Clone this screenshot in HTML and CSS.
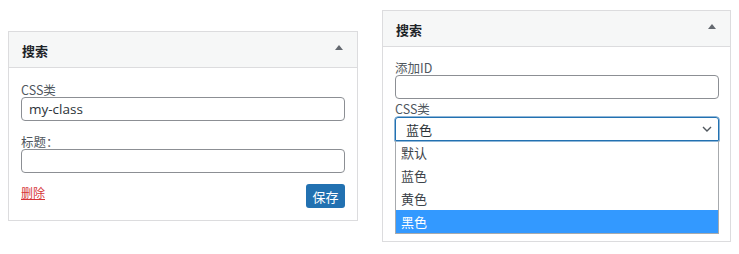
FILE: index.html
```html
<!DOCTYPE html>
<html lang="zh">
<head>
<meta charset="utf-8">
<link rel="stylesheet" href="styles.css">
</head>
<body>
<div class="stage">
  <section class="panel panel-left">
    <header class="panel-head"><span class="title">搜索</span><span class="toggle"></span></header>
    <div class="panel-body">
      <label class="lbl">CSS类</label>
      <div class="field">my-class</div>
      <label class="lbl lbl-gap">标题：</label>
      <div class="field"></div>
      <div class="actions">
        <a class="delete">删除</a>
        <button class="save">保存</button>
      </div>
    </div>
  </section>
  <section class="panel panel-right">
    <header class="panel-head"><span class="title">搜索</span><span class="toggle"></span></header>
    <div class="panel-body body-right">
      <label class="lbl">添加ID</label>
      <div class="field"></div>
      <label class="lbl lbl-small-gap">CSS类</label>
      <div class="select">
        <span>蓝色</span>
        <svg class="chev" width="10" height="6" viewBox="0 0 10 6"><path d="M1 1 L5 5 L9 1" fill="none" stroke="#50575e" stroke-width="1.4"/></svg>
      </div>
      <ul class="listbox">
        <li>默认</li>
        <li>蓝色</li>
        <li>黄色</li>
        <li class="active">黑色</li>
      </ul>
    </div>
  </section>
</div>
</body>
</html>
```
FILE: styles.css
```css
* { box-sizing: border-box; }
html, body { margin: 0; padding: 0; background: #fff; }
body {
  font-family: "Noto Sans", "Noto Sans CJK SC", sans-serif;
  font-size: 13px;
  color: #3c434a;
}
.stage {
  display: flex;
  align-items: flex-start;
  gap: 24px;
  padding: 10px 0 0 8px;
}
.panel {
  border: 1px solid #dcdcde;
  background: #fff;
}
.panel-left { width: 350px; margin-top: 21px; }
.panel-right { width: 349px; }
.panel-head {
  height: 36px;
  background: #f6f7f7;
  border-bottom: 1px solid #dcdcde;
  display: flex;
  align-items: center;
  justify-content: space-between;
  padding: 0 14px 0 13px;
}
.title {
  font-family: "Noto Sans CJK SC", sans-serif;
  font-weight: 700;
  font-size: 13px;
  color: #1d2327;
  margin-top: 2px;
}
.toggle {
  width: 0; height: 0;
  border-left: 4px solid transparent;
  border-right: 4px solid transparent;
  border-bottom: 5px solid #646970;
  margin-top: -4px;
}
.panel-body {
  padding: 15px 12px 12px 12px;
  display: flex;
  flex-direction: column;
}
.body-right { padding: 14px 11px 7px 12px; }
.lbl {
  display: block;
  font-family: "Noto Sans CJK SC", sans-serif;
  font-size: 12.5px;
  line-height: 14px;
  color: #50575e;
}
.lbl-gap { margin-top: 14px; }
.lbl-small-gap { margin-top: 3px; margin-bottom: 1px; }
.field {
  height: 24px;
  border: 1px solid #8c8f94;
  border-radius: 4px;
  padding: 0 7px;
  font-family: "Open Sans", "Noto Sans CJK SC", sans-serif;
  font-size: 13.5px;
  line-height: 22px;
  color: #2c3338;
}
.actions {
  display: flex;
  justify-content: space-between;
  align-items: flex-start;
  margin-top: 11px;
}
.delete {
  font-family: "Noto Sans CJK SC", sans-serif;
  color: #d63638;
  text-decoration: underline;
  font-size: 12px;
  line-height: 14px;
  margin-top: 2px;
}
.save {
  width: 39px;
  height: 24px;
  border: 0;
  border-radius: 3px;
  background: #2271b1;
  color: #fff;
  font-family: "Noto Sans CJK SC", sans-serif;
  font-size: 13px;
  padding: 0;
}
.select {
  height: 24px;
  border: 1px solid #2271b1;
  border-radius: 3px 3px 0 0;
  display: flex;
  align-items: center;
  justify-content: space-between;
  padding: 0 6px 0 10px;
  font-family: "Noto Sans CJK SC", sans-serif;
  font-size: 13px;
  color: #2c3338;
  box-shadow: 0 0 0 0.5px #2271b1;
}
.listbox {
  list-style: none;
  margin: 0;
  padding: 0;
  border: 1px solid #a7aaad;
  border-top: 0;
  font-family: "Noto Sans CJK SC", sans-serif;
  font-size: 13px;
  color: #3c434a;
}
.listbox li {
  height: 23px;
  line-height: 23px;
  padding-left: 5px;
}
.listbox li.active {
  background: #3399ff;
  color: #fff;
}
```
